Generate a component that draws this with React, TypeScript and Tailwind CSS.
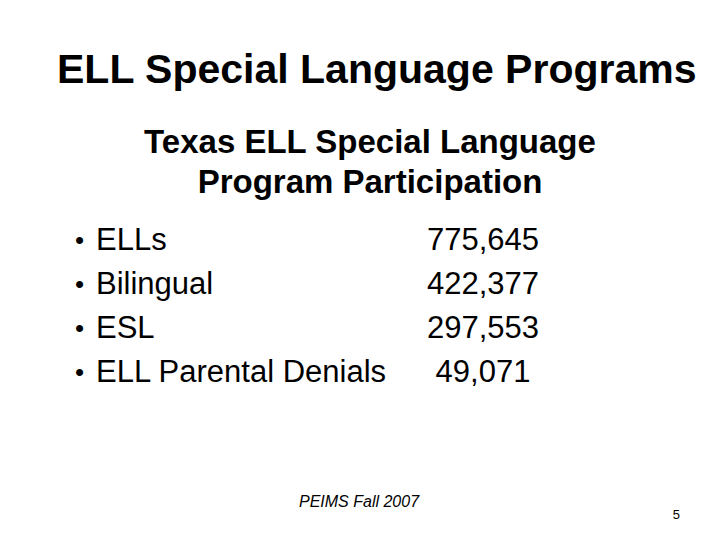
const rows = [
  { label: "ELLs", value: "775,645" },
  { label: "Bilingual", value: "422,377" },
  { label: "ESL", value: "297,553" },
  { label: "ELL Parental Denials", value: "\u00a049,071" },
];

export default function App() {
  return (
    <div className="w-[720px] h-[540px] bg-white text-black font-['Liberation_Sans',Arial,sans-serif] flex flex-col">
      <h1 className="pt-[45px] pl-[57px] text-[41px] leading-[48px] font-bold whitespace-nowrap">
        ELL Special Language Programs
      </h1>
      <div className="mt-[29px] w-[740px] text-center text-[33px] leading-[40px] font-bold">
        <p>Texas ELL Special Language</p>
        <p>Program Participation</p>
      </div>
      <ul className="mt-[16px] pl-[75px] flex flex-col">
        {rows.map((row) => (
          <li key={row.label} className="flex items-center h-[44px] text-[31px]">
            <span className="w-[21px] text-[26px]">•</span>
            <span className="w-[331px]">{row.label}</span>
            <span className="whitespace-pre">{row.value}</span>
          </li>
        ))}
      </ul>
      <div className="mt-auto mb-[16px] flex items-end">
        <p className="ml-[299px] mb-[10px] text-[16px] italic">PEIMS Fall 2007</p>
        <p className="ml-auto mr-[40px] text-[13px]">5</p>
      </div>
    </div>
  );
}
